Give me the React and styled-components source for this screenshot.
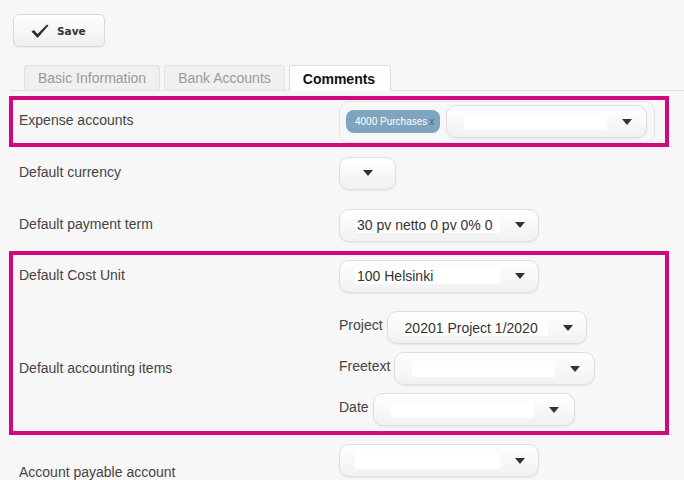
import styled, { createGlobalStyle } from "styled-components";

const Global = createGlobalStyle`
  body {
    margin: 0;
    background: #f7f7f7;
    font-family: "Liberation Sans", Arial, sans-serif;
  }
`;

export default function App() {
  return (
    <Page>
      <Global />
      <Toolbar>
        <SaveButton>
          <svg width="18" height="14" viewBox="0 0 18 14">
            <path d="M0.5 7.5 L3 6 L6.5 10 L16 0.5 L17.5 1.5 L7 13.5 L6 13.5 Z" fill="#2e2e2e" />
          </svg>
          Save
        </SaveButton>
      </Toolbar>

      <TabBar>
        <Tab>Basic Information</Tab>
        <Tab>Bank Accounts</Tab>
        <Tab $active>Comments</Tab>
      </TabBar>

      <Form>
        <Highlight $top={5}>
          <Row $h={43}>
            <Label $drop={-3}>Expense accounts</Label>
            <MultiBox>
              <Tag>
                4000 Purchases<TagX>x</TagX>
              </Tag>
              <Select $w={201} $pl={17}>
                <Field $w={143} />
                <Arrow />
              </Select>
            </MultiBox>
          </Row>
        </Highlight>

        <Row $h={52} $plain>
          <Label $drop={-2}>Default currency</Label>
          <Select $w={57} $center>
            <Arrow $m={0} />
          </Select>
        </Row>

        <Row $h={52} $plain>
          <Label $drop={-2}>Default payment term</Label>
          <Select $w={200}>
            <Field>30 pv netto 0 pv 0% 0</Field>
            <Arrow />
          </Select>
        </Row>

        <Highlight $top={0}>
          <Row $h={42}>
            <Label $drop={-2}>Default Cost Unit</Label>
            <Select $w={200}>
              <Field>100 Helsinki</Field>
              <Arrow />
            </Select>
          </Row>
          <Row $top={14} $bottom={5}>
            <Label $drop={-1}>Default accounting items</Label>
            <Items>
              <ItemRow>
                <ItemLabel>Project</ItemLabel>
                <Select $w={200}>
                  <Field>20201 Project 1/2020</Field>
                  <Arrow />
                </Select>
              </ItemRow>
              <ItemRow>
                <ItemLabel>Freetext</ItemLabel>
                <Select $w={201} $pl={17}>
                  <Field $w={143} />
                  <Arrow />
                </Select>
              </ItemRow>
              <ItemRow>
                <ItemLabel>Date</ItemLabel>
                <Select $w={202} $pl={17}>
                  <Field $w={143} />
                  <Arrow />
                </Select>
              </ItemRow>
            </Items>
          </Row>
        </Highlight>

        <Row $h={52} $plain $start>
          <Label $drop={29}>Account payable account</Label>
          <Select $w={200} $mt={9}>
            <Field />
            <Arrow />
          </Select>
        </Row>
      </Form>
    </Page>
  );
}

// ----------------------- Styled Components -----------------------
const Page = styled.div`
  width: 684px;
  height: 480px;
  overflow: hidden;
`;

const Toolbar = styled.div`
  padding: 14px 0 0 13px;
`;

const SaveButton = styled.button`
  display: flex;
  align-items: center;
  gap: 8px;
  width: 92px;
  height: 33px;
  box-sizing: border-box;
  padding: 0 0 0 17px;
  border: 1px solid #d9d9d9;
  border-radius: 6px;
  background: linear-gradient(#ffffff, #eeeeee);
  box-shadow: 0 1px 2px rgba(0, 0, 0, 0.06);
  font-family: "DejaVu Sans", Verdana, sans-serif;
  font-weight: bold;
  font-size: 10.5px;
  color: #333;
`;

const TabBar = styled.div`
  display: flex;
  gap: 4px;
  margin: 18px 0 0 10px;
  padding-left: 14px;
  border-bottom: 1px solid #e2e2e2;
  height: 25px;
`;

const Tab = styled.div`
  height: 26px;
  box-sizing: border-box;
  padding: 0 13px;
  display: flex;
  align-items: center;
  font-size: 14px;
  border: 1px solid ${(p) => (p.$active ? "#dcdcdc" : "#e2e2e2")};
  border-bottom: ${(p) => (p.$active ? "none" : "1px solid #e2e2e2")};
  border-radius: 3px 3px 0 0;
  background: ${(p) => (p.$active ? "#ffffff" : "#f0f0f0")};
  color: ${(p) => (p.$active ? "#111" : "#9a9a9a")};
  font-weight: ${(p) => (p.$active ? "bold" : "normal")};
  padding-right: ${(p) => (p.$active ? "15px" : "13px")};
`;

const Form = styled.div`
  display: flex;
  flex-direction: column;
`;

const Highlight = styled.div`
  margin: ${(p) => p.$top}px 15px 0 9px;
  border: 4px solid #d5077f;
  padding-left: 6px;
`;

const Row = styled.div`
  display: flex;
  align-items: ${(p) => (p.$start ? "flex-start" : "center")};
  height: ${(p) => (p.$h ? `${p.$h}px` : "auto")};
  padding-left: ${(p) => (p.$plain ? "19px" : "0")};
  margin-top: ${(p) => p.$top || 0}px;
  padding-bottom: ${(p) => p.$bottom || 0}px;
`;

const Label = styled.div`
  width: 320px;
  flex: none;
  font-size: 14px;
  color: #444;
  margin-top: ${(p) => p.$drop || 0}px;
`;

const Select = styled.div`
  display: flex;
  align-items: center;
  justify-content: ${(p) => (p.$center ? "center" : "flex-start")};
  width: ${(p) => p.$w}px;
  height: 33px;
  box-sizing: border-box;
  margin-top: ${(p) => p.$mt || 0}px;
  padding-left: ${(p) => (p.$center ? 0 : p.$pl ?? 15)}px;
  border: 1px solid #dedede;
  border-radius: 10px;
  background: linear-gradient(#ffffff, #f1f1f1);
  box-shadow: 0 1px 2px rgba(0, 0, 0, 0.07);
`;

const Field = styled.span`
  width: ${(p) => p.$w || 145}px;
  height: 16px;
  line-height: 16px;
  padding-left: 2px;
  box-sizing: border-box;
  background: #ffffff;
  font-size: 14px;
  color: #333;
  white-space: nowrap;
  overflow: hidden;
`;

const Arrow = styled.span`
  width: 0;
  height: 0;
  margin-left: ${(p) => p.$m ?? 15}px;
  border-left: 5px solid transparent;
  border-right: 5px solid transparent;
  border-top: 6px solid #333;
`;

const MultiBox = styled.div`
  display: flex;
  align-items: center;
  gap: 6px;
  width: 316px;
  height: 42px;
  box-sizing: border-box;
  padding-left: 6px;
  border: 1px solid #e6e6e6;
  border-radius: 10px;
`;

const Tag = styled.span`
  display: flex;
  align-items: center;
  height: 23px;
  padding: 0 6px 0 9px;
  border-radius: 8px;
  background: #7ea5bd;
  color: #fff;
  font-size: 10px;
`;

const TagX = styled.span`
  margin-left: 2px;
  color: #2d6da3;
`;

const Items = styled.div`
  display: flex;
  flex-direction: column;
  gap: 8px;
`;

const ItemRow = styled.div`
  display: flex;
  align-items: center;
  gap: 4px;
`;

const ItemLabel = styled.span`
  font-size: 14px;
  color: #444;
  margin-top: -6px;
`;
